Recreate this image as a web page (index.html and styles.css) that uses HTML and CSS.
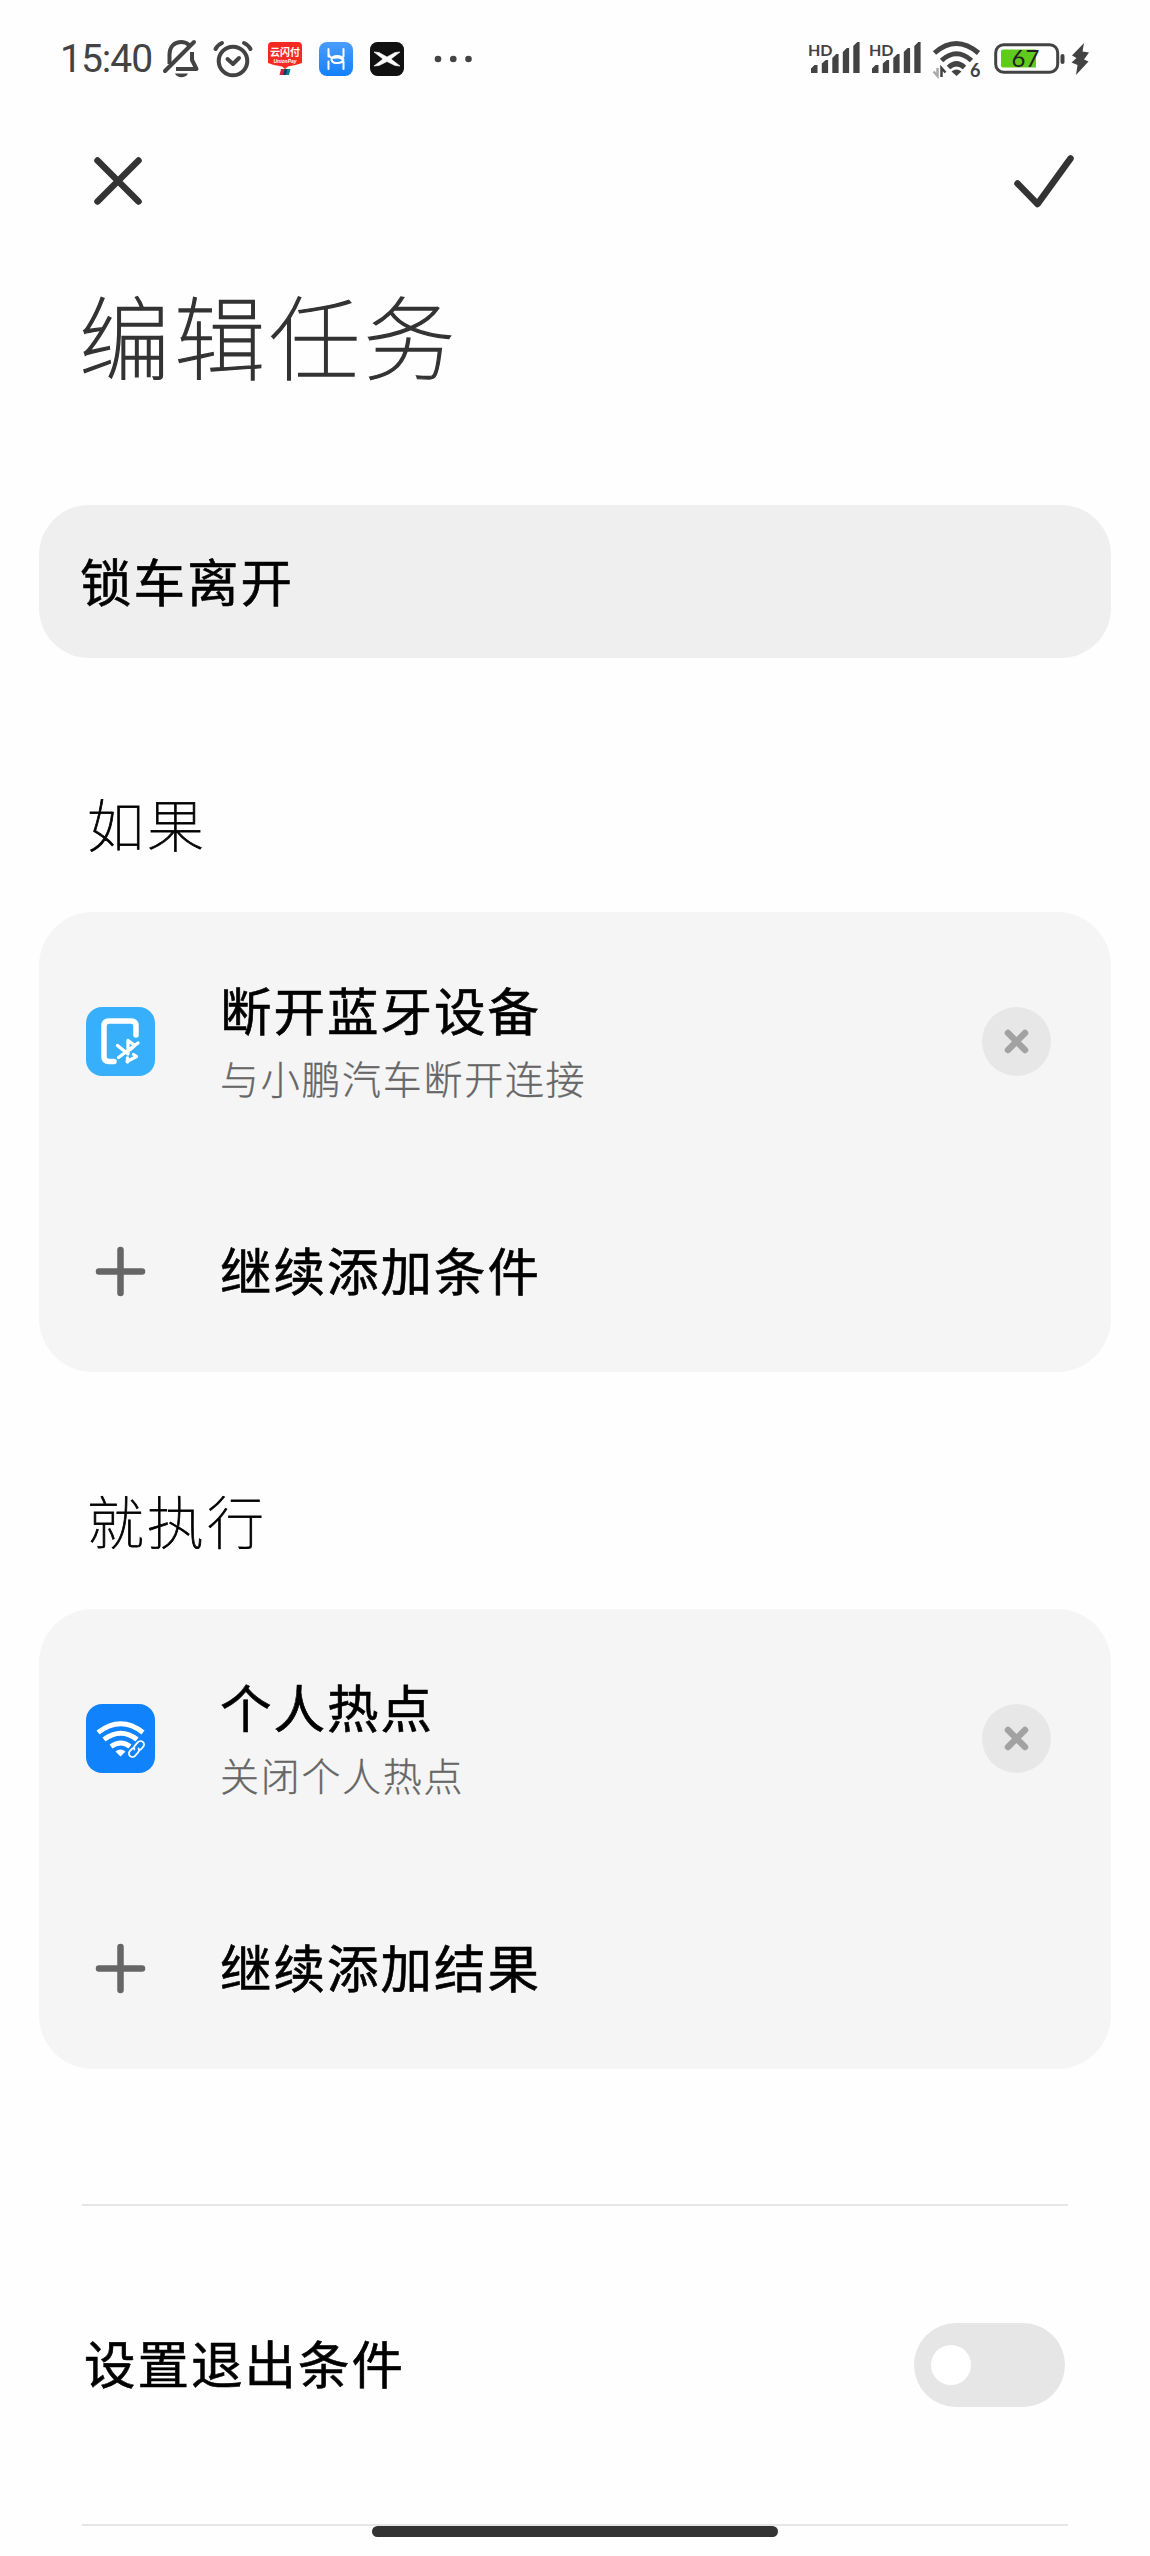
FILE: index.html
```html
<!DOCTYPE html>
<html lang="zh-CN">
<head>
<meta charset="utf-8">
<title>编辑任务</title>
<link rel="stylesheet" href="styles.css">
</head>
<body>
<div class="screen">
  <header class="status">
    <span class="clock">15:40</span>
    <div class="tray">
      <svg width="36" height="40" viewBox="0 0 36 40" fill="none" stroke="#434343" stroke-width="4" stroke-linejoin="round">
        <path d="M6.500 25V16C6.500 7 12 3 18 3c3.500 0 6 1 8 3M29 13v8l4.500 9H13" />
        <path d="M2 32L31 3" stroke-linecap="round"/>
        <path d="M12 34.500h13c-2 5-11 5-13 0z" fill="#434343" stroke="none"/>
      </svg>
      <svg class="alarm" width="40" height="38" viewBox="0 0 40 38" fill="none" stroke="#434343" stroke-width="4" stroke-linecap="round" stroke-linejoin="round">
        <circle cx="20" cy="21" r="14.300"/>
        <path d="M14.500 19l5.500 5 6-6M2.500 9Q4.500 5 9 3M31 3q4.500 2 6.500 6"/>
      </svg>
      <svg class="pay" width="36" height="36" viewBox="0 0 36 36">
        <path d="M5 1h26q4 0 4 4v17q-8 3-14 3.500L18 28l-3-2.500Q8 25 1 22V5q0-4 4-4z" fill="#f52a22"/>
        <path d="M14 28h4l-1.500 6h-4z" fill="#d32237"/><path d="M17.500 28h3.500l-1.500 6H16z" fill="#173a6c"/><path d="M20.500 28h3l-1.500 6h-3z" fill="#00868c"/>
        <text class="pay-cn" x="18" y="15" text-anchor="middle">云闪付</text>
        <text class="pay-en" x="18" y="21.500" text-anchor="middle">UnionPay</text>
      </svg>
      <svg class="app-h" width="34" height="34" viewBox="0 0 34 34">
        <defs><linearGradient id="blue" x1="0" y1="0" x2="0" y2="1"><stop offset="0" stop-color="#4a9dfb"/><stop offset="1" stop-color="#1380fb"/></linearGradient></defs>
        <rect width="34" height="34" rx="8" fill="url(#blue)"/>
        <path d="M9.500 7v7.500M9.500 19.500V27M24.500 7v7.500M24.500 19.500V27M9.500 11c0 5 4 5 8 4.500 4-.5 6.500 1.500 6.500 4M24.500 17.500c-2-5-11-4.500-12-.5-.5 5 9 5 11.500 2" fill="none" stroke="#fff" stroke-width="2" stroke-linecap="round"/>
      </svg>
      <svg class="app-x" width="34" height="34" viewBox="0 0 34 34">
        <rect width="34" height="34" rx="7.500" fill="#111"/>
        <path d="M4 10l5 .5 8 4.500 8-4.500 5-.5-9 7 9 7-5-.5-8-4-8 4-5 .5 9-7z" fill="#fff" stroke="#fff" stroke-width=".6"/>
      </svg>
      <svg class="more" width="38" height="8" viewBox="0 0 38 8" fill="#434343"><circle cx="4" cy="4" r="3.300"/><circle cx="19.300" cy="4" r="3.300"/><circle cx="34.500" cy="4" r="3.300"/></svg>
    </div>
    <div class="system">
      <svg width="52" height="36" viewBox="0 0 52 36" fill="#434343">
        <text class="hd" x="0" y="14.500">HD</text>
        <path id="bars" d="M3 32v-4.500l3.500-3.500h3V32zM13.800 22.500l4-3.500h2.300v13h-6.300zM24.300 17l4-4h2.300v19h-6.300zM34.800 11l4-4h2.300v25h-6.300zM45.300 5l4-4h2.300v31h-6.300z"/>
      </svg>
      <svg class="sim2" width="52" height="36" viewBox="0 0 52 36" fill="#434343">
        <text class="hd" x="0" y="14.500">HD</text><use href="#bars"/>
      </svg>
      <svg class="wifi" width="50" height="38" viewBox="0 0 50 38" fill="none" stroke="#434343" stroke-width="5">
        <path d="M2.500 13Q24 -6 46.500 13M9.500 20.500Q24.500 7 39.500 20.500M16.500 27.500Q24.500 20 32.500 27.500"/>
        <path d="M19.500 31.500q5-4 10 0l-5 4.500z" fill="#434343" stroke="none"/>
        <path d="M5.500 28v8L1.500 31.500" stroke="#aaa" stroke-width="2.500"/><path d="M9.500 37v-9l4 4.500" stroke-width="2.500"/>
        <text class="wifi-gen" x="38" y="36.500">6</text>
      </svg>
      <svg class="battery" width="72" height="32" viewBox="0 0 72 32">
        <rect x="1.700" y="1.700" width="62" height="27.500" rx="8" fill="none" stroke="#434343" stroke-width="3"/>
        <path d="M9 6.500h33v18H9a2 2 0 0 1-2-2v-14a2 2 0 0 1 2-2z" fill="#5fcb1c"/>
        <rect x="66.500" y="11" width="4" height="10" rx="2" fill="#434343"/>
        <text class="level" x="31.500" y="24" text-anchor="middle">67</text>
      </svg>
      <svg class="bolt" width="20" height="32" viewBox="0 0 20 32" fill="#434343"><path d="M14 0L2 12.500l4.500 2.500L1.500 19.500 7.500 22 6 32 18.500 18.500 14 16.500 19 9.500l-6.500-1z"/></svg>
    </div>
  </header>

  <nav class="toolbar">
    <svg width="50" height="50" viewBox="0 0 50 50" fill="none" stroke="#333" stroke-width="6.500" stroke-linecap="round"><path d="M4.500 4.500l41 41M45.500 4.500l-41 41"/></svg>
    <svg width="62" height="54" viewBox="0 0 62 54" fill="none" stroke="#333" stroke-width="6.500" stroke-linecap="round" stroke-linejoin="round"><path d="M4.500 29.500l20 20.500 33-45.500"/></svg>
  </nav>

  <h1>编辑任务</h1>
  <div class="name-field">锁车离开</div>

  <h2>如果</h2>
  <section class="card">
    <div class="row entry">
      <svg class="lead" viewBox="0 0 69 69">
        <rect width="69" height="69" rx="16" fill="#38affb"/>
        <path d="M28 54.500h-5q-5 0-5-5V19q0-5 5-5h22q5 0 5 5v9" fill="none" stroke="#fff" stroke-width="5.500" stroke-linecap="round"/>
        <path d="M31.500 38.500L42 47M32.500 50.500L52 36M42 46V33.500l7 5-6 5M41 54.500l9.500-5-3-2M41.500 55v-4" fill="none" stroke="#fff" stroke-width="3.300" stroke-linecap="round" stroke-linejoin="round"/>
      </svg>
      <div class="copy"><div class="label">断开蓝牙设备</div><div class="hint">与小鹏汽车断开连接</div></div>
      <svg class="remove" viewBox="0 0 69 69"><circle cx="34.500" cy="34.500" r="34.500" fill="#e7e7e7"/><path d="M26 26l17 17M43 26L26 43" stroke="#a2a2a2" stroke-width="6.500" stroke-linecap="round"/></svg>
    </div>
    <div class="row add">
      <svg class="lead" viewBox="0 0 69 69"><path d="M13 34.500h43M34.500 13v43" stroke="#666" stroke-width="6.500" stroke-linecap="round"/></svg>
      <div class="label">继续添加条件</div>
    </div>
  </section>

  <h2>就执行</h2>
  <section class="card">
    <div class="row entry">
      <svg class="lead" viewBox="0 0 69 69">
        <rect width="69" height="69" rx="16" fill="#1083fc"/>
        <g fill="none" stroke="#fff">
          <path d="M12 28.500q23-17.500 45 0M18 35.500q17-12.500 33 0M25 42.500q10-7 19 0" stroke-width="5"/>
          <g transform="rotate(-48 50.500 45)" stroke-width="1.800"><path d="M49 41.500h-4.500a3.500 3.500 0 0 0 0 7h4.500q3 0 3.500-3M52 48.500h4.500a3.500 3.500 0 0 0 0-7H52q-3 0-3.500 3"/></g>
        </g>
        <path d="M29.500 47.500q5-4 10 0l-5 5z" fill="#fff"/>
      </svg>
      <div class="copy"><div class="label">个人热点</div><div class="hint">关闭个人热点</div></div>
      <svg class="remove" viewBox="0 0 69 69"><circle cx="34.500" cy="34.500" r="34.500" fill="#e7e7e7"/><path d="M26 26l17 17M43 26L26 43" stroke="#a2a2a2" stroke-width="6.500" stroke-linecap="round"/></svg>
    </div>
    <div class="row add">
      <svg class="lead" viewBox="0 0 69 69"><path d="M13 34.500h43M34.500 13v43" stroke="#666" stroke-width="6.500" stroke-linecap="round"/></svg>
      <div class="label">继续添加结果</div>
    </div>
  </section>

  <div class="exit">
    <div class="label">设置退出条件</div>
    <div class="switch"><div class="knob"></div></div>
  </div>
  <div class="home-bar"></div>
</div>
</body>
</html>
```
FILE: styles.css
```css
* { box-sizing: border-box; }
body { margin: 0; background: #fefefe; }
svg { display: block; flex: none; overflow: visible; }
.screen {
  position: relative;
  width: 1150px;
  height: 2556px;
  overflow: hidden;
  background: #fefefe;
  color: #000;
  font-family: "Noto Sans CJK SC", sans-serif;
  display: flex;
  flex-direction: column;
}
.status { height: 118px; display: flex; align-items: center; padding: 0 60px; color: #434343; }
.clock { font: 400 39px/46px Roboto, sans-serif; letter-spacing: -1px; width: 103px; white-space: nowrap; }
.tray, .system { display: flex; align-items: center; }
.alarm, .pay { margin-left: 14px; }
.app-h { margin-left: 16px; }
.app-x { margin-left: 17px; }
.more { margin-left: 30px; }
.system { margin-left: auto; }
.sim2 { margin-left: 9px; }
.wifi { margin-left: 11px; }
.battery { margin-left: 12px; }
.bolt { margin-left: 4px; }
.hd { font: 700 16px Lato, sans-serif; }
.level { font: 400 24px Lato, sans-serif; fill: #222; }
.wifi-gen { font: 700 18px Lato, sans-serif; fill: #434343; stroke: none; }
.pay-cn { font: 700 10px "Noto Sans CJK SC", sans-serif; fill: #fff; }
.pay-en { font: italic 700 5px "Liberation Sans", sans-serif; fill: #fff; }
.toolbar { height: 126px; display: flex; justify-content: space-between; align-items: center; padding: 0 75px 0 93px; }
h1 { margin: 39px 0 0 79px; font-size: 91px; line-height: 100px; font-weight: 100; letter-spacing: 4px; color: #333; -webkit-text-stroke: 1.300px #333; }
.name-field {
  margin: 122px 39px 0;
  height: 153px;
  border-radius: 50px;
  background: #efefef;
  padding: 0 41px;
  font-size: 51.500px;
  line-height: 149px;
  letter-spacing: 2px;
  -webkit-text-stroke: .6px #000;
}
h2 { margin: 134px 0 0 87px; font-size: 57px; line-height: 60px; font-weight: 100; letter-spacing: 3px; -webkit-text-stroke: .8px #000; }
.card { margin: 60px 39px 0; height: 460px; border-radius: 54px; background: #f5f5f5; padding: 60px 60px 60px 47px; }
.card + h2 { margin-top: 117px; }
.row { display: flex; align-items: center; }
.entry { height: 139px; }
.add { height: 69px; margin-top: 126px; }
.lead, .remove { width: 69px; height: 69px; }
.copy, .add .label { margin-left: 65px; }
.remove { margin-left: auto; }
.label { margin-top: -6px; font-size: 51.500px; line-height: 70px; letter-spacing: 2px; white-space: nowrap; -webkit-text-stroke: .6px #000; }
.copy .label { margin: -3px 0 3px; }
.hint { font-size: 39px; line-height: 60px; font-weight: 300; letter-spacing: 1.700px; color: #666; white-space: nowrap; -webkit-text-stroke: .3px #666; }
.exit {
  margin: 135px 82px 0;
  height: 322px;
  border-top: 2px solid #e6e6e6;
  border-bottom: 2px solid #e6e6e6;
  display: flex;
  align-items: center;
  justify-content: space-between;
  padding: 0 3px 0 2px;
}
.switch { width: 151px; height: 84px; border-radius: 42px; background: #e6e6e6; padding: 22px 17px; }
.knob { width: 40px; height: 40px; border-radius: 50%; background: #fff; }
.home-bar { position: absolute; left: 372px; top: 2526px; width: 406px; height: 11px; border-radius: 6px; background: #333; }
```
